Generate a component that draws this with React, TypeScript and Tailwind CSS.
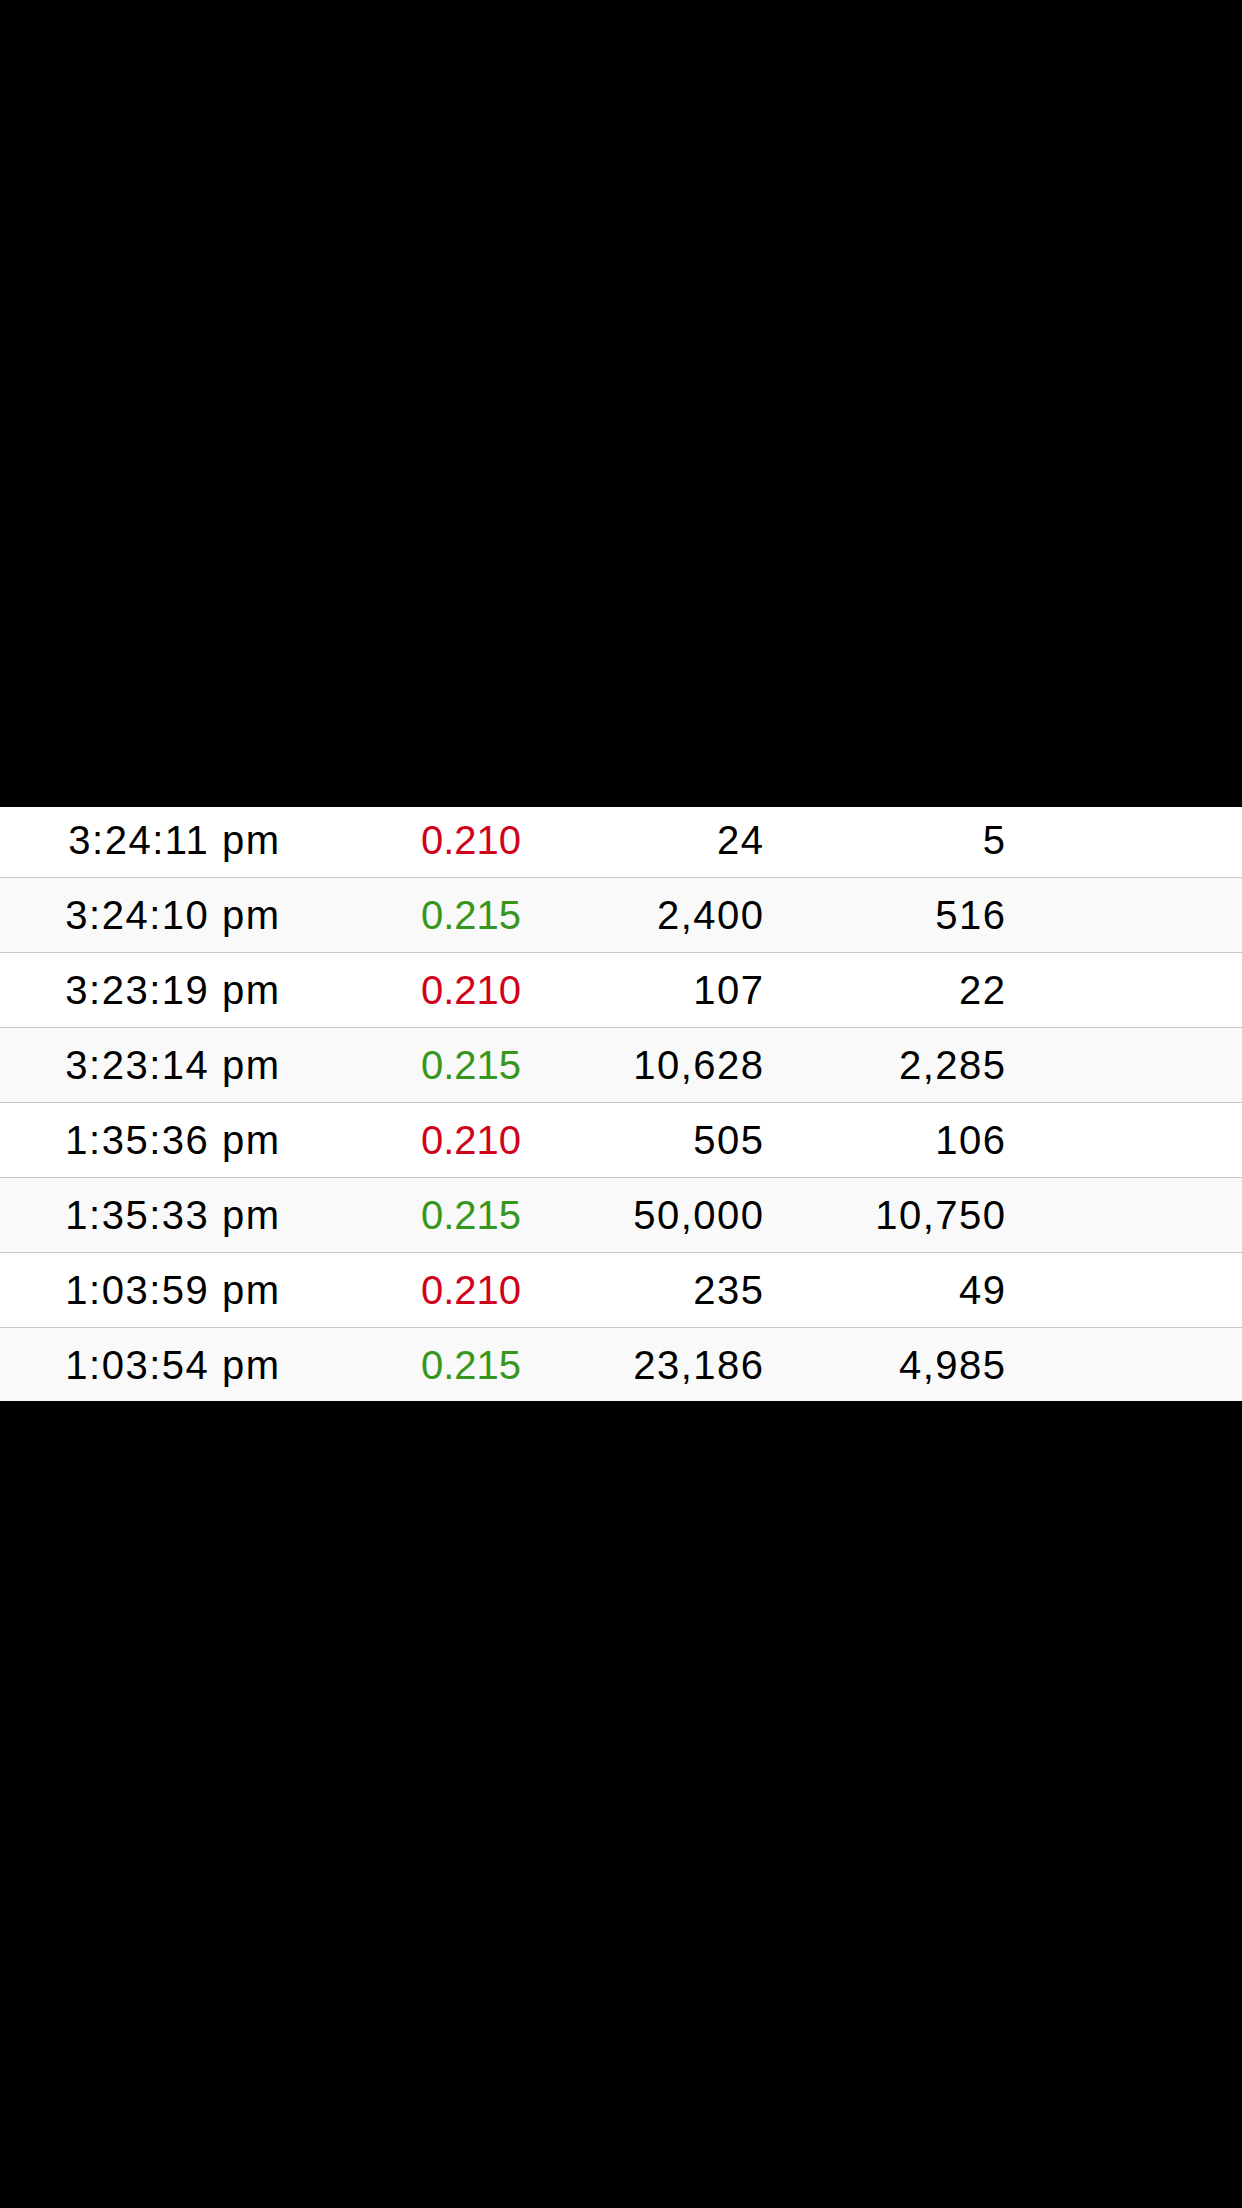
const trades = [
  { time: "3:24:11 pm", price: "0.210", qty: "24", value: "5" },
  { time: "3:24:10 pm", price: "0.215", qty: "2,400", value: "516" },
  { time: "3:23:19 pm", price: "0.210", qty: "107", value: "22" },
  { time: "3:23:14 pm", price: "0.215", qty: "10,628", value: "2,285" },
  { time: "1:35:36 pm", price: "0.210", qty: "505", value: "106" },
  { time: "1:35:33 pm", price: "0.215", qty: "50,000", value: "10,750" },
  { time: "1:03:59 pm", price: "0.210", qty: "235", value: "49" },
  { time: "1:03:54 pm", price: "0.215", qty: "23,186", value: "4,985" },
];

function Cell({ text }: { text: string }) {
  return (
    <div className="w-[242px] text-right">
      <span className="tracking-[1.5px] -mr-[1.5px]">{text}</span>
    </div>
  );
}

export default function App() {
  return (
    <div
      className="w-[1242px] h-[2208px] bg-black flex flex-col"
      style={{ fontFamily: '"Liberation Sans", Arial, sans-serif' }}
    >
      <div className="h-[807px] shrink-0" />
      <div className="h-[594px] overflow-hidden shrink-0">
        <div className="-mt-[4px]">
          {trades.map((t, i) => (
            <div
              key={t.time}
              className={`h-[75px] flex items-center pl-[37px] border-b border-[#c8c7cc] text-[40px] text-black ${
                i % 2 === 0 ? "bg-white" : "bg-[#f9f9f9]"
              }`}
            >
              <Cell text={t.time} />
              <div
                className={`w-[242px] text-right ${
                  t.price === "0.210" ? "text-[#d0021b]" : "text-[#36961d]"
                }`}
              >
                {t.price}
              </div>
              <Cell text={t.qty} />
              <Cell text={t.value} />
            </div>
          ))}
        </div>
      </div>
      <div className="flex-1" />
    </div>
  );
}
